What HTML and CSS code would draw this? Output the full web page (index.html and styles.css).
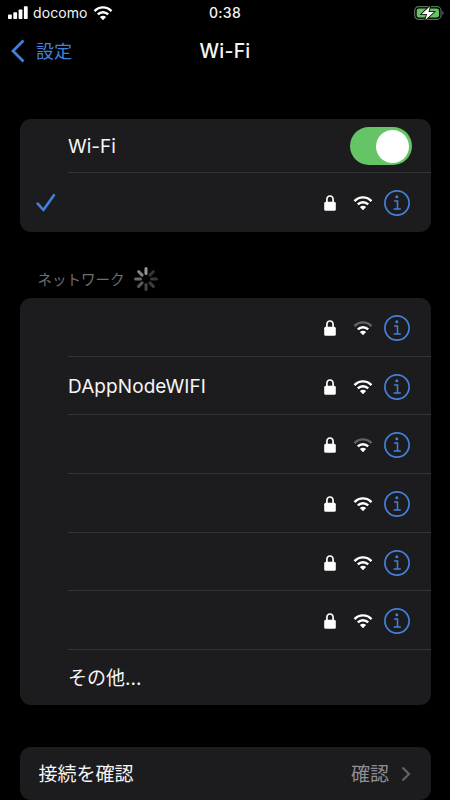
FILE: index.html
```html
<!DOCTYPE html>
<html lang="ja">
<head>
<meta charset="utf-8">
<title>Wi-Fi</title>
<link rel="stylesheet" href="styles.css">
</head>
<body>
<svg class="symbols" aria-hidden="true">
  <symbol id="lock" viewBox="0 0 12 16">
    <path d="M2.9 8V4.7C2.9 2.3 4.1 1 6 1s3.100 1.300 3.100 3.700V8" fill="none" stroke="#fff" stroke-width="1.700"/>
    <rect x="0.200" y="6.700" width="11.600" height="9.100" rx="1.500" fill="#fff"/>
  </symbol>
  <symbol id="wifi" viewBox="0 0 20 16">
    <path class="outer" d="M1.500 6.100C6.200 1.100 13.800 1.100 18.500 6.100" fill="none" stroke-width="2.400"/>
    <path d="M4.800 9.400C7.700 6.500 12.300 6.500 15.200 9.400" fill="none" stroke="#fff" stroke-width="2.400"/>
    <path d="M6.900 12.100Q10 9.600 13.100 12.100L10.500 14.800Q10 15.300 9.500 14.800Z" fill="#fff"/>
  </symbol>
  <symbol id="info" viewBox="0 0 26 26">
    <circle cx="13" cy="13" r="12.100" fill="none" stroke="#4380dc" stroke-width="1.700"/>
    <circle cx="12.800" cy="6.700" r="1.500" fill="#4380dc"/>
    <path d="M10.100 10.900H13.500V19M9.700 19H16.800" fill="none" stroke="#4380dc" stroke-width="1.500"/>
  </symbol>
</svg>
<header class="status">
  <div class="carrier">
    <svg class="signal" viewBox="0 0 20 13" fill="#fff"><rect y="8.500" width="3.800" height="4.500" rx=".8"/><rect x="5.300" y="6.200" width="3.800" height="6.800" rx=".8"/><rect x="10.600" y="3.400" width="3.800" height="9.600" rx=".8"/><rect x="15.900" y=".3" width="3.800" height="12.700" rx=".8"/></svg>
    <span>docomo</span>
    <svg class="statuswifi"><use href="#wifi"/></svg>
  </div>
  <span class="time">0:38</span>
  <svg class="battery" viewBox="0 0 30 16">
    <rect x=".7" y="1.700" width="26.300" height="12.600" rx="3.800" fill="none" stroke="#58705a" stroke-width="1.200"/>
    <rect x="2.700" y="3.600" width="22.300" height="8.800" rx="2.200" fill="#65c466"/>
    <path d="M28.300 6v4q1.300-.6 1.300-2t-1.300-2Z" fill="#666"/>
    <path d="M16 1.200 7.700 8.900H13L11.300 14.900 20 7H14.500Z" fill="#fff" stroke="#000" stroke-width="1.600" paint-order="stroke"/>
  </svg>
</header>
<nav class="nav">
  <a class="back"><svg viewBox="0 0 14 24"><path d="M12.500 1.500 2 12 12.500 22.500" fill="none" stroke="#4380dc" stroke-width="2.800"/></svg><span>設定</span></a>
  <h1>Wi-Fi</h1>
</nav>
<main>
  <section class="card current">
    <div class="row"><span class="name">Wi-Fi</span><span class="switch"><i></i></span></div>
    <div class="row linked"><svg class="check" viewBox="0 0 20 20"><path d="M1.700 10.700 7.400 17 17.900 2.200" fill="none" stroke="#4380dc" stroke-width="2.600" stroke-linecap="round" stroke-linejoin="round"/></svg><span class="icons"><svg class="lock"><use href="#lock"/></svg><svg class="wifi"><use href="#wifi"/></svg><svg class="info"><use href="#info"/></svg></span></div>
  </section>
  <div class="heading"><span>ネットワーク</span>
    <svg class="spinner" viewBox="-12 -12 24 24" stroke-width="3" stroke-linecap="round"><path d="M0-5.500V-10.400" stroke="#98989a"/><path d="M3.900-3.900 7.400-7.400" stroke="#343436"/><path d="M5.500 0H10.400" stroke="#39393b"/><path d="M3.900 3.900 7.400 7.400" stroke="#3d3d3f"/><path d="M0 5.500V10.400" stroke="#454547"/><path d="M-3.900 3.900-7.400 7.400" stroke="#58585a"/><path d="M-5.500 0H-10.400" stroke="#69696b"/><path d="M-3.900-3.900-7.400-7.400" stroke="#808082"/></svg>
  </div>
  <section class="card networks">
    <div class="row weak"><span class="icons"><svg class="lock"><use href="#lock"/></svg><svg class="wifi"><use href="#wifi"/></svg><svg class="info"><use href="#info"/></svg></span></div>
    <div class="row"><span class="name ssid">DAppNodeWIFI</span><span class="icons"><svg class="lock"><use href="#lock"/></svg><svg class="wifi"><use href="#wifi"/></svg><svg class="info"><use href="#info"/></svg></span></div>
    <div class="row weak"><span class="icons"><svg class="lock"><use href="#lock"/></svg><svg class="wifi"><use href="#wifi"/></svg><svg class="info"><use href="#info"/></svg></span></div>
    <div class="row"><span class="icons"><svg class="lock"><use href="#lock"/></svg><svg class="wifi"><use href="#wifi"/></svg><svg class="info"><use href="#info"/></svg></span></div>
    <div class="row"><span class="icons"><svg class="lock"><use href="#lock"/></svg><svg class="wifi"><use href="#wifi"/></svg><svg class="info"><use href="#info"/></svg></span></div>
    <div class="row"><span class="icons"><svg class="lock"><use href="#lock"/></svg><svg class="wifi"><use href="#wifi"/></svg><svg class="info"><use href="#info"/></svg></span></div>
    <div class="row other"><span class="name">その他...</span></div>
  </section>
  <section class="card confirm"><span>接続を確認</span><span class="action">確認<svg viewBox="0 0 10 16"><path d="M1.500 1.500 8 8 1.500 14.500" fill="none" stroke="#636366" stroke-width="2.200"/></svg></span></section>
</main>
</body>
</html>
```
FILE: styles.css
```css
* { box-sizing: border-box; }
body {
  margin: 0;
  width: 450px;
  height: 800px;
  overflow: hidden;
  background: #000;
  color: #f5f5f7;
  font: 19px/24px Inter, "Noto Sans CJK JP", sans-serif;
}
svg { display: block; flex: none; }
.symbols { display: none; }
.outer { stroke: var(--outer, #fff); }
.status {
  display: grid;
  grid-template-columns: 1fr auto 1fr;
  align-items: center;
  height: 25px;
  padding: 0 6px 0 8px;
  font-size: 14px;
}
.carrier { display: flex; align-items: center; }
.carrier span { margin-left: 5px; letter-spacing: .1px; }
.signal { width: 20px; height: 13px; }
.statuswifi { width: 20px; height: 16px; margin-left: 5px; }
.time { margin-right: 2px; font-weight: 500; letter-spacing: .3px; }
.battery { width: 30px; height: 16px; justify-self: end; }
.nav {
  display: grid;
  grid-template-columns: 1fr auto 1fr;
  align-items: center;
  height: 52px;
  padding-left: 11px;
}
.back { display: flex; align-items: center; color: #4380dc; font-size: 18px; }
.back svg { width: 14px; height: 24px; margin-right: 11px; }
.back span { padding-top: 2px; }
.nav h1 { margin: 0 11px 0 0; font-size: 19.500px; font-weight: 500; letter-spacing: .2px; }
main { padding: 42px 19.500px 0; }
.card { background: #1c1c1e; border-radius: 11px; }
.row {
  display: flex;
  align-items: center;
  height: 58.700px;
  padding-top: 1px;
  padding-right: 20.500px;
  padding-left: 48.500px;
  background: linear-gradient(#343437, #343437) 48px 100% / 100% 1px no-repeat;
}
.row:last-child { background: none; }
.current { height: 112.500px; }
.current .row:first-child { height: 54px; padding-top: 0; padding-right: 19px; }
.current .name { padding-top: 2px; }
.current .linked { height: 58.500px; padding-left: 16px; }
.ssid { padding-top: 1px; letter-spacing: .08px; }
.switch {
  width: 62px;
  height: 38px;
  margin-left: auto;
  padding: 2.500px;
  border-radius: 19px;
  background: #65c466;
}
.switch i { display: block; width: 33px; height: 33px; margin-left: auto; border-radius: 50%; background: #fff; }
.check { width: 20px; height: 20px; }
.icons { display: flex; align-items: center; margin-left: auto; }
.lock { width: 12px; height: 16px; }
.wifi { width: 20px; height: 16px; margin: 0 11px 0 17.500px; }
.info { width: 26px; height: 26px; }
.weak .wifi { --outer: #626264; }
.heading { display: flex; align-items: center; height: 66.500px; padding: 28px 0 0 18px; color: #6f6f73; font-size: 14.500px; }
.heading span { padding-top: 2px; }
.spinner { width: 24px; height: 24px; margin-left: 9px; }
.networks { height: 406.500px; }
.networks .other { height: 54.300px; padding-top: 4px; }
.confirm {
  display: flex;
  align-items: center;
  justify-content: space-between;
  height: 53px;
  margin-top: 42px;
  padding: 4px 19.500px 0 19px;
}
.action { display: flex; align-items: center; color: #8e8e93; }
.action svg { width: 10px; height: 16px; margin: -2px 0 0 12px; }
```
